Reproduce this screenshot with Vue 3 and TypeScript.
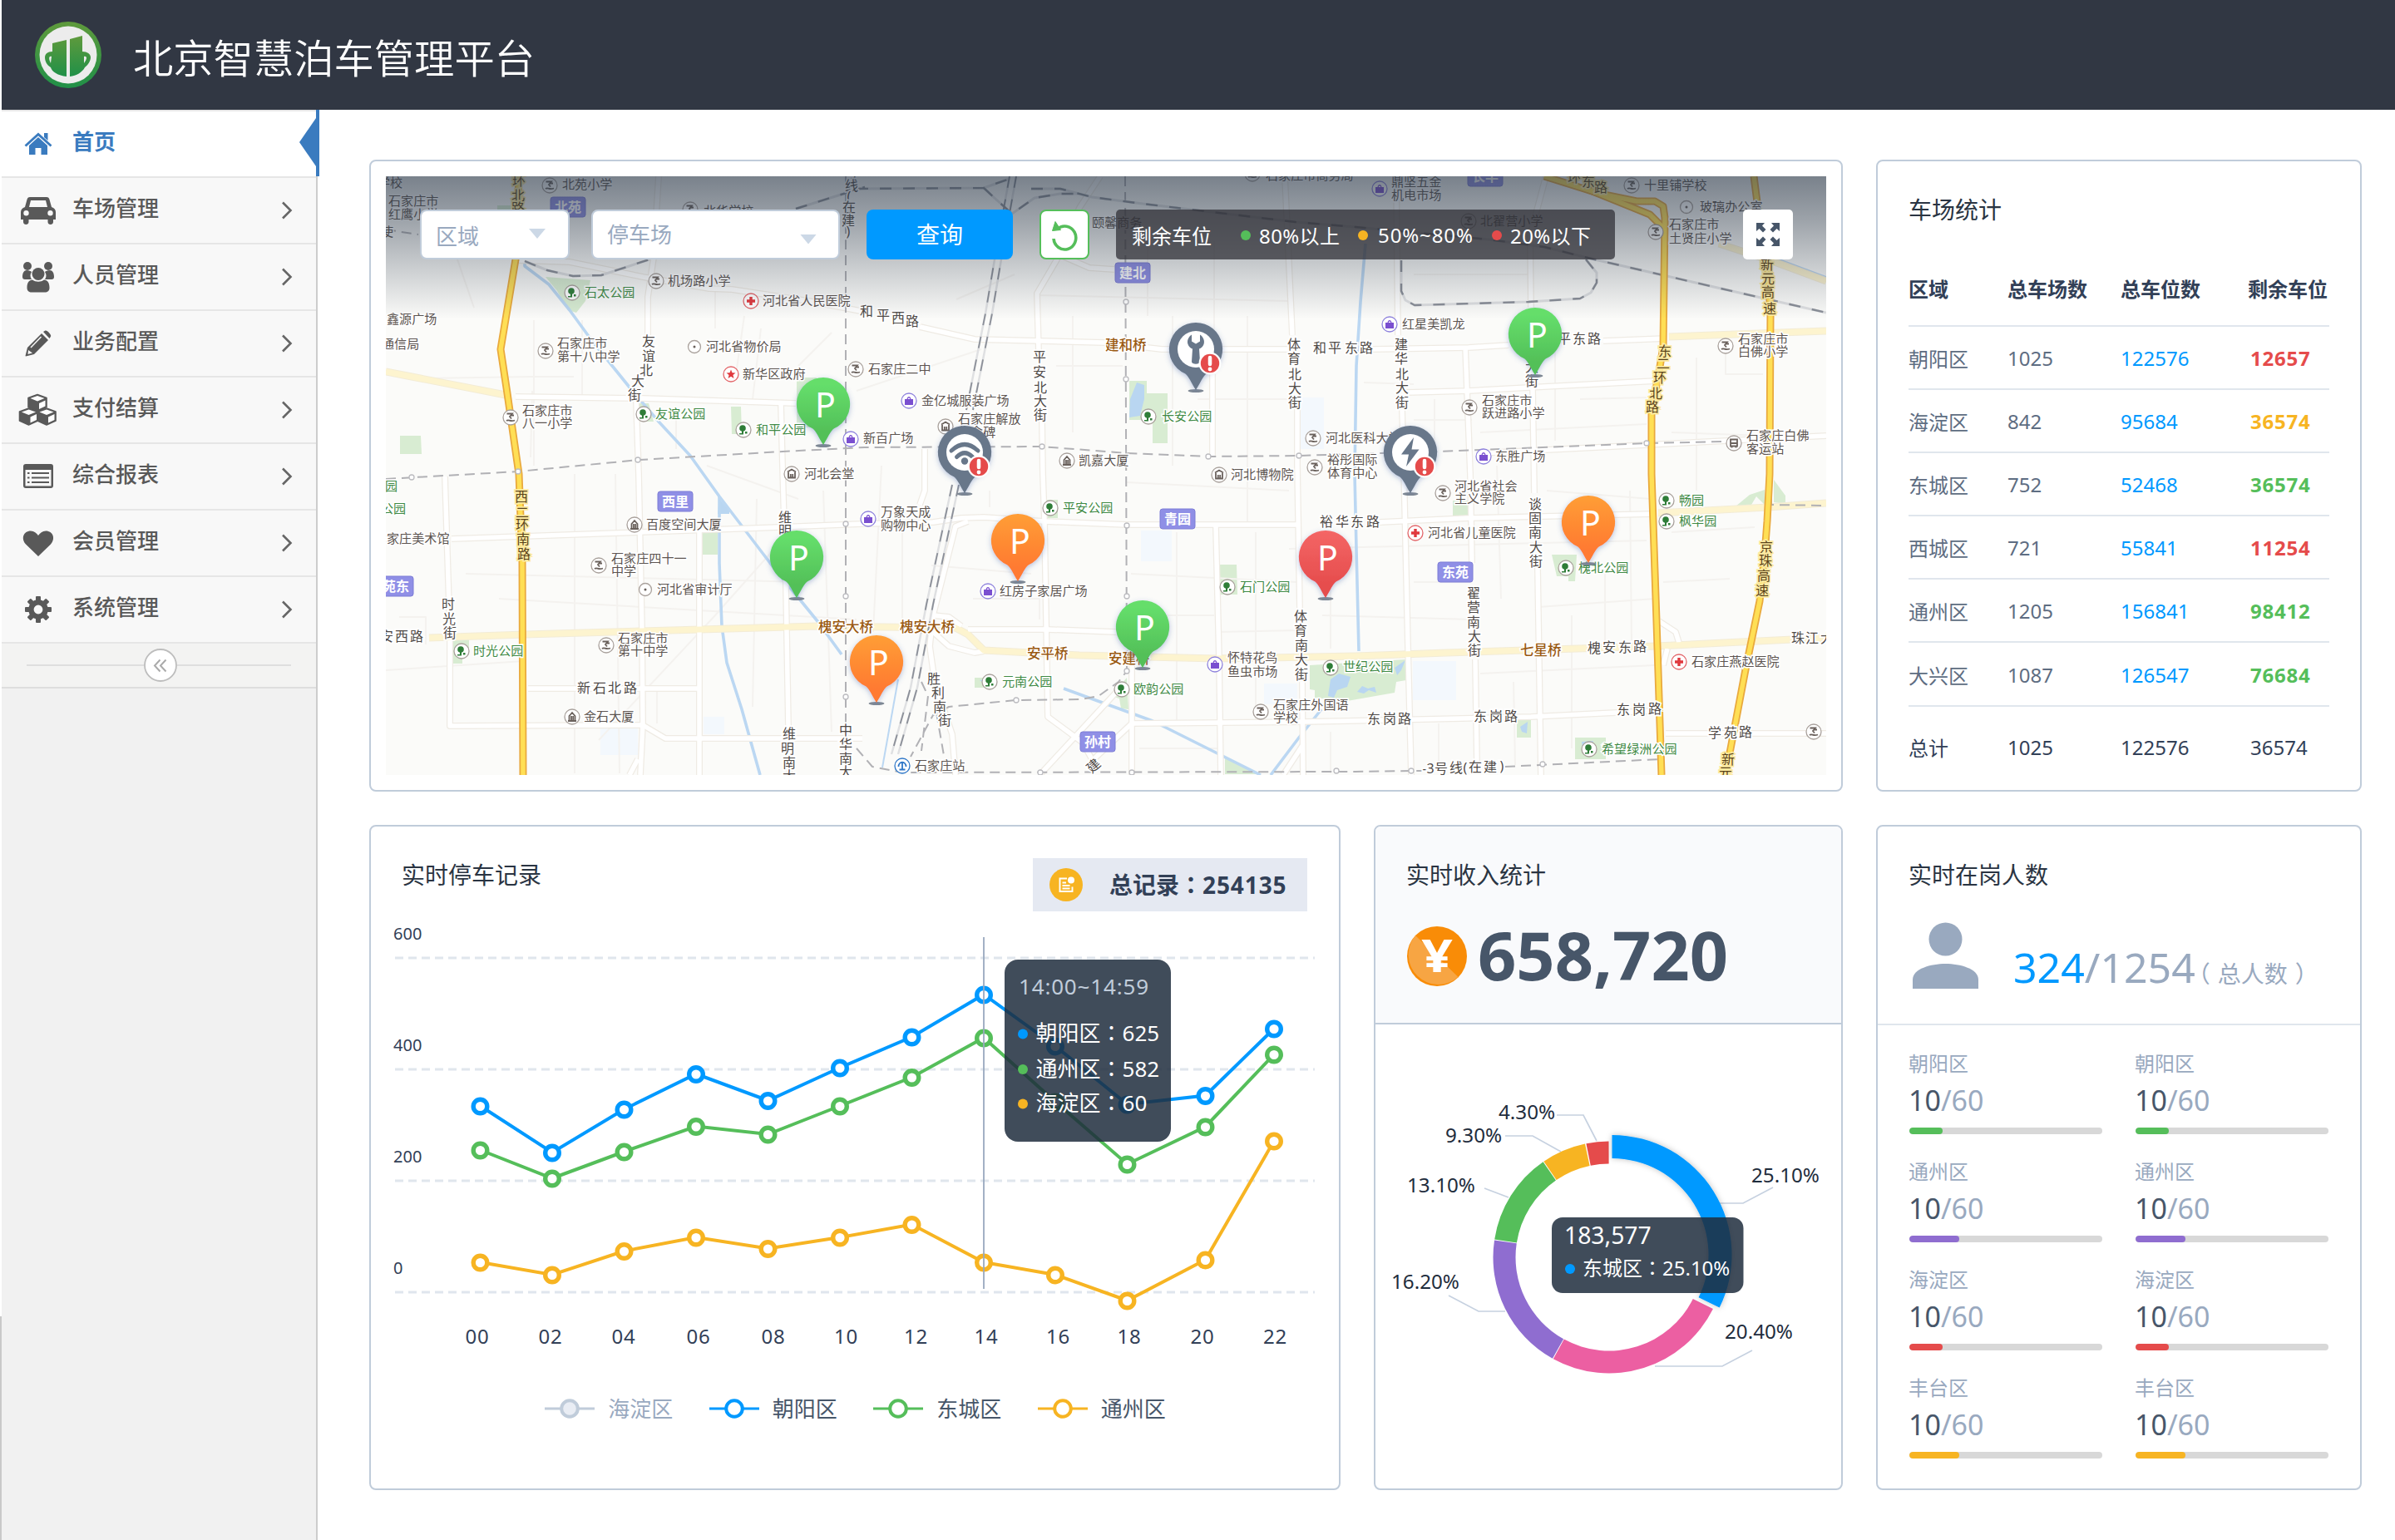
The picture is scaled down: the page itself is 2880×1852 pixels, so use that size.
<script setup lang="ts">
interface MenuItem { label: string; icon: string }
interface Place { x: number; y: number; icon: string; tx: number; lines: [number, string][] }

const menu: MenuItem[] = [
  { label: '首页', icon: 'home' },
  { label: '车场管理', icon: 'car' },
  { label: '人员管理', icon: 'users' },
  { label: '业务配置', icon: 'pencil' },
  { label: '支付结算', icon: 'cubes' },
  { label: '综合报表', icon: 'list' },
  { label: '会员管理', icon: 'heart' },
  { label: '系统管理', icon: 'gear' },
]

/* ---------- map ---------- */
const parks: string[] = [
  '656,333 710,337 704,362 693,376 683,373 670,350',
  '958,454 982,454 982,514 958,514',
  '879,489 891,489 892,522 880,522',
  '481,524 506,524 507,546 481,546',
  '767,485 780,485 786,507 770,507',
  '845,640 863,640 863,667 845,667',
  '543,769 564,769 564,782 556,782 556,798 543,798',
  '1358,458 1379,458 1379,473 1404,473 1404,533 1386,533 1386,505 1358,505',
  '1258,601 1272,601 1272,623 1258,623',
  '1466,679 1487,679 1488,715 1466,715',
  '1172,815 1195,815 1195,827 1172,827',
  '1336,837 1355,815 1357,853 1348,852 1346,840',
  '1575,800 1691,793 1691,818 1679,820 1677,833 1620,843 1581,839 1581,830 1575,829',
  '1473,910 1516,931 1473,931',
  '1747,602 1765,602 1765,622 1747,622',
  '1866,667 1896,667 1894,699 1886,699 1886,693 1872,693',
  '1824,865 1841,865 1841,887 1824,887',
  '1894,887 1931,887 1931,913 1894,913',
  '2087,609 2104,595 2122,589 2122,607 2112,597 2106,607',
  '2133,577 2147,596 2147,606 2133,604',
  '598,247 614,247 614,254 598,254',
]
const waters: string[] = [
  '1367,460 1376,463 1376,480 1371,500 1358,502 1359,480',
  '1600,817 1610,810 1624,814 1620,826 1608,830 1604,839 1597,837',
  '1677,803 1690,794 1685,806 1680,812',
  '1632,832 1638,825 1645,828 1653,826 1655,833 1646,830 1640,834',
  '1828,874 1837,868 1836,882 1830,880',
  '1902,892 1916,891 1914,899 1903,899',
  '1178,818 1188,816 1186,823',
  '865,600 877,613 877,618 863,618',
]
const buildings: number[][] = [
  [722, 874, 45, 34], [1372, 638, 37, 37], [1699, 795, 52, 47], [1562, 478, 30, 62], [1520, 822, 40, 25], [846, 862, 25, 21],
]
const minorRoads: string[] = [
  '550,312 570,370', '642,385 642,560', '510,455 640,453', '860,350 860,395', '640,453 690,453',
  '700,385 700,480', '813,490 813,540', '895,380 885,450', '915,395 905,480', '850,560 960,600',
  '691,570 691,930', '480,742 512,742 512,775', '560,690 970,700', '600,720 1030,745', '720,890 860,740 940,650',
  '910,600 905,850', '990,590 1000,880', '1060,560 1050,760', '1085,640 1085,760', '1120,680 1240,690',
  '1170,720 1250,720 1250,745', '1190,590 1190,610', '1030,470 1180,420', '1290,380 1290,520', '1150,360 1220,330',
  '1245,355 1550,362', '1270,440 1350,440', '1440,480 1550,480', '1410,380 1410,560', '1500,380 1500,630',
  '1355,580 1550,590', '1360,690 1560,700', '1415,640 1415,870', '1510,640 1510,870', '1362,740 1460,740',
  '1465,760 1560,758', '1600,640 1600,780', '1590,740 1770,745', '1700,700 1770,700', '1640,460 1700,462',
  '1700,505 1770,505', '1725,480 1725,540', '1870,420 1870,530', '1780,520 1980,510', '1900,480 1980,478',
  '1800,560 1805,720', '1850,730 1990,720', '1890,740 1890,900', '1860,590 1985,600', '1930,690 1930,780',
  '1960,590 1962,770', '1780,810 1990,800', '1820,820 1822,920', '2010,520 2120,524', '2075,420 2075,450 2120,450',
  '2010,640 2110,634', '2000,700 2080,696', '2040,430 2040,590', '1700,330 1840,330', '1380,290 1380,380',
  '1460,290 1460,400', '1370,900 1470,900', '1600,880 1600,930', '1730,870 1730,930', '1550,660 1980,650',
  '464,806 630,795', '640,470 638,550', '740,570 745,930', '790,830 790,870', '1000,400 960,440',
]
const roads: string[] = [
  '792,212 786,310 779,357 779,403', '765,483 768,570 772,757 773,870 770,932', '767,913 757,932',
  '624,313 685,315 773,333 853,347 880,348 972,362 1040,375', '1106,393 1172,408 1328,412 1397,420 1550,420',
  '1651,420 1766,418 1814,415', '1928,410 2003,407', '620,477 773,479 957,485', '939,485 941,560 945,703 949,932',
  '543,648 769,640 911,635 1037,630 1122,628 1156,623 1183,622 1256,627 1355,631 1562,631',
  '1659,628 1766,623 1988,618', '535,573 541,760 541,873 773,872 800,888 1037,888',
  '635,828 841,828', '841,637 841,932', '1323,212 1298,250 1271,312 1247,353 1249,423', '1271,305 1310,322 1340,324',
  '1253,507 1254,570 1256,627 1260,862 1302,893 1313,913', '1164,757 1260,757 1342,760',
  '1164,627 1149,633 1122,740 1118,777 1124,820 1145,883 1149,932', '1122,760 1141,777 1172,785 1183,783',
  '1122,740 1141,742 1156,753', '1351,823 1252,930', '1361,800 1361,932', '1361,870 1566,868 1620,867 1841,862 1984,855',
  '1361,870 1313,915', '1545,212 1554,403', '1560,487 1560,560 1563,733', '1566,820 1567,932', '1566,897 1543,932',
  '1458,450 1458,550', '1462,633 1466,793 1468,932', '1679,212 1681,403', '1686,493 1688,560 1693,777 1697,932',
  '1859,212 1840,283 1841,370', '1843,467 1845,593', '1849,683 1853,932', '1762,417 1768,570 1770,677',
  '1774,793 1776,918', '1691,472 1766,470 1857,465 1992,458', '2003,882 2196,882', '1995,747 2015,760 2019,773',
  '2005,780 2000,800', '1112,540 1112,590 1106,607', '1780,545 2196,524', '464,648 475,648',
]
const paleRoads: string[] = [
  '464,447 490,452 608,475',
  '516,767 631,763 842,757 983,753 1149,755 1164,763 1183,782 1298,788 1462,792 1630,789 1740,785 1992,777 2094,772 2196,767',
  '2007,405 2196,398', '1994,617 2126,610 2196,605', '2067,293 2134,315 2196,338',
]
const rivers: string[] = [
  '631,314 631,320 660,342 685,373 712,410 758,467 792,507 830,548 865,597 926,677 983,747 1012,787',
  '865,597 865,677 868,753 874,797 892,853 914,932', '1279,828 1386,867 1516,932', '1528,932 1562,887 1589,853',
  '1642,293 1636,363 1631,440 1629,570 1631,660 1634,783', '2134,310 2196,333', '1924,228 1988,257', '1080,817 1061,923',
]
const highways: string[] = [
  '624,212 620,312 602,420 610,473 624,570 628,675 629,932',
  '1857,212 1924,233 1968,242 1990,242 2000,248 2002,262 2000,417 1994,453 1986,493 1986,570 1992,747 1998,932',
  '1905,226 1984,258 2001,275',
  '2109,212 2113,243 2125,317 2129,377 2128,570 2125,627 2122,667 2116,723 2100,800 2075,932',
]
const metro: string[] = [
  '464,576 623,567 769,553 941,543 1040,538 1252,537 1355,545 1453,549 1562,548 1727,543 1980,533 2075,531',
  '1017,212 1017,932', '1353,212 1355,807 1345,820 1321,837 1300,841 1221,842 1141,850 1122,860 1095,910',
  '1030,900 1049,922 1085,929 1630,928 1697,927 1712,927', '1810,922 1996,913', '2130,560 2130,607 2196,608',
  '1108,820 1116,837 1108,903', '1126,857 1137,920', '464,276 503,282',
]
const rails: string[] = [
  '1030,227 1183,226 1214,215', '1183,226 1198,240 1217,257 1244,238 1275,233 1298,233', '1240,227 1275,227 1313,237 1374,245 1558,267 1630,273 1790,288 1857,297 1913,311 2000,331 2196,376',
  '1685,313 1685,350 1690,361 1701,367 1838,363 1900,359 1913,352 1920,340 1920,328 1907,312', '631,314 658,325 689,332 723,331 781,312', '957,251 1040,225',
  '1214,212 1196,312 1185,377 1162,493', '1222,212 1204,312 1193,377 1170,493',
  '1145,583 1114,727 1095,827 1072,907', '1153,583 1122,727 1103,827 1080,907',
]
const stops: number[][] = [
  [767, 553], [623, 567], [495, 574], [1017, 630], [1017, 717], [1017, 838], [1354, 363], [1354, 456], [1253, 537],
  [1453, 549], [1562, 548], [1355, 632], [1355, 717], [1355, 807], [1222, 842], [1251, 929], [1361, 929], [1607, 927],
  [1980, 533], [1697, 927], [1855, 919],
]
const places: Place[] = [
  { x: 661, y: 223, icon: 'school', tx: 676, lines: [[222, '北苑小学']] },
  { x: 830, y: 252, icon: 'school', tx: 846, lines: [[254, '北华学校']] },
  { x: 789, y: 338, icon: 'school', tx: 803, lines: [[338, '机场路小学']] },
  { x: 688, y: 352, icon: 'park', tx: 703, lines: [[352, '石太公园']] },
  { x: 903, y: 362, icon: 'cross', tx: 917, lines: [[362, '河北省人民医院']] },
  { x: 656, y: 422, icon: 'school', tx: 670, lines: [[413, '石家庄市'], [429, '第十八中学']] },
  { x: 835, y: 417, icon: 'dot', tx: 849, lines: [[417, '河北省物价局']] },
  { x: 879, y: 450, icon: 'star', tx: 893, lines: [[450, '新华区政府']] },
  { x: 614, y: 502, icon: 'school', tx: 628, lines: [[494, '石家庄市'], [509, '八一小学']] },
  { x: 774, y: 498, icon: 'park', tx: 788, lines: [[498, '友谊公园']] },
  { x: 894, y: 517, icon: 'park', tx: 909, lines: [[517, '和平公园']] },
  { x: 1023, y: 528, icon: 'shop', tx: 1038, lines: [[527, '新百广场']] },
  { x: 1029, y: 444, icon: 'school', tx: 1044, lines: [[444, '石家庄二中']] },
  { x: 952, y: 570, icon: 'hall', tx: 967, lines: [[570, '河北会堂']] },
  { x: 1093, y: 482, icon: 'shop', tx: 1108, lines: [[482, '金亿城服装广场']] },
  { x: 1137, y: 513, icon: 'hall', tx: 1152, lines: [[504, '石家庄解放'], [520, '纪念碑']] },
  { x: 1381, y: 501, icon: 'park', tx: 1397, lines: [[501, '长安公园']] },
  { x: 1283, y: 554, icon: 'tower', tx: 1297, lines: [[554, '凯嘉大厦']] },
  { x: 1579, y: 527, icon: 'school', tx: 1594, lines: [[527, '河北医科大学']] },
  { x: 1581, y: 562, icon: 'school', tx: 1596, lines: [[553, '裕彤国际'], [569, '体育中心']] },
  { x: 1466, y: 571, icon: 'hall', tx: 1480, lines: [[571, '河北博物院']] },
  { x: 1506, y: 209, icon: 'school', tx: 1522, lines: [[211, '石家庄市商务局']] },
  { x: 1659, y: 227, icon: 'shop', tx: 1673, lines: [[219, '鼎坚五金'], [235, '机电市场']] },
  { x: 1962, y: 223, icon: 'school', tx: 1977, lines: [[223, '十里铺学校']] },
  { x: 2028, y: 249, icon: 'dot', tx: 2044, lines: [[249, '玻璃办公室']] },
  { x: 1991, y: 279, icon: 'school', tx: 2007, lines: [[270, '石家庄市'], [287, '土贤庄小学']] },
  { x: 1766, y: 266, icon: 'school', tx: 1780, lines: [[266, '北翟营小学']] },
  { x: 1671, y: 390, icon: 'shop', tx: 1686, lines: [[390, '红星美凯龙']] },
  { x: 2075, y: 416, icon: 'school', tx: 2090, lines: [[408, '石家庄市'], [423, '白佛小学']] },
  { x: 1767, y: 490, icon: 'school', tx: 1782, lines: [[482, '石家庄市'], [497, '跃进路小学']] },
  { x: 1784, y: 549, icon: 'shop', tx: 1798, lines: [[549, '东胜广场']] },
  { x: 2085, y: 533, icon: 'bus', tx: 2100, lines: [[524, '石家庄白佛'], [540, '客运站']] },
  { x: 763, y: 631, icon: 'tower', tx: 777, lines: [[631, '百度空间大厦']] },
  { x: 720, y: 680, icon: 'school', tx: 735, lines: [[672, '石家庄四十一'], [687, '中学']] },
  { x: 776, y: 709, icon: 'dot', tx: 790, lines: [[709, '河北省审计厅']] },
  { x: 555, y: 783, icon: 'park', tx: 569, lines: [[783, '时光公园']] },
  { x: 729, y: 776, icon: 'school', tx: 743, lines: [[768, '石家庄市'], [783, '第十中学']] },
  { x: 688, y: 862, icon: 'tower', tx: 702, lines: [[862, '金石大厦']] },
  { x: 1044, y: 624, icon: 'shop', tx: 1059, lines: [[616, '万象天成'], [632, '购物中心']] },
  { x: 1263, y: 611, icon: 'park', tx: 1278, lines: [[611, '平安公园']] },
  { x: 1188, y: 711, icon: 'shop', tx: 1202, lines: [[711, '红房子家居广场']] },
  { x: 1476, y: 706, icon: 'park', tx: 1491, lines: [[706, '石门公园']] },
  { x: 1461, y: 799, icon: 'shop', tx: 1476, lines: [[791, '怀特花鸟'], [808, '鱼虫市场']] },
  { x: 1600, y: 803, icon: 'park', tx: 1615, lines: [[802, '世纪公园']] },
  { x: 1190, y: 820, icon: 'park', tx: 1205, lines: [[820, '元南公园']] },
  { x: 1349, y: 829, icon: 'park', tx: 1363, lines: [[829, '欧韵公园']] },
  { x: 1516, y: 856, icon: 'school', tx: 1531, lines: [[848, '石家庄外国语'], [863, '学校']] },
  { x: 1085, y: 921, icon: 'station', tx: 1100, lines: [[921, '石家庄站']] },
  { x: 1735, y: 593, icon: 'school', tx: 1749, lines: [[585, '河北省社会'], [600, '主义学院']] },
  { x: 2004, y: 602, icon: 'park', tx: 2019, lines: [[602, '畅园']] },
  { x: 2004, y: 627, icon: 'park', tx: 2019, lines: [[627, '枫华园']] },
  { x: 1702, y: 641, icon: 'cross', tx: 1717, lines: [[641, '河北省儿童医院']] },
  { x: 1883, y: 683, icon: 'park', tx: 1898, lines: [[683, '槐北公园']] },
  { x: 2019, y: 796, icon: 'cross', tx: 2034, lines: [[796, '石家庄燕赵医院']] },
  { x: 1911, y: 901, icon: 'park', tx: 1926, lines: [[901, '希望绿洲公园']] },
  { x: 2181, y: 880, icon: 'school', tx: 2196, lines: [] },
]
const captions: [number, number, string, string][] = [
  [454, 220, '学校', ''], [467, 242, '石家庄市', ''], [467, 258, '红鹰小学', ''], [458, 279, '使', ''],
  [465, 384, '鑫源广场', ''], [459, 414, '通信局', ''], [463, 585, '园', 'green'], [458, 612, '公园', 'green'],
  [465, 648, '家庄美术馆', ''], [1313, 268, '颐馨商务', ''],
  [1329, 415, '建和桥', 'bridge'], [984, 754, '槐安大桥', 'bridge'], [1082, 754, '槐安大桥', 'bridge'],
  [1235, 786, '安平桥', 'bridge'], [1333, 792, '安建桥', 'bridge'], [1828, 782, '七星桥', 'bridge'],
]
const tags: [number, number, string][] = [
  [683, 249, '北苑'], [1362, 328, '建北'], [1786, 212, '长丰'], [812, 603, '西里'], [476, 705, '苑东'],
  [1416, 624, '青园'], [1320, 892, '孙村'], [1750, 688, '东苑'],
]
/* Street names are set one character at a time along the road: x, y pairs per character. */
const streets: [string, number[], boolean?][] = [
  ['环北路', [624, 218, 623, 236, 623, 251], true],
  ['号线(在建)', [1024, 208, 1024, 224, 1021, 237, 1021, 250, 1020, 266, 1020, 279]],
  ['友谊北大街', [780, 411, 780, 429, 777, 446, 767, 459, 763, 476]],
  ['和平西路', [1042, 375, 1062, 380, 1080, 383, 1097, 387]],
  ['平安北大街', [1250, 430, 1250, 448, 1251, 467, 1251, 483, 1251, 500]],
  ['和平东路', [1587, 419, 1605, 419, 1625, 419, 1643, 419]],
  ['体育北大街', [1556, 415, 1556, 432, 1557, 451, 1557, 468, 1557, 485]],
  ['环东路', [1893, 214, 1910, 219, 1925, 226], true],
  ['新元高速', [2125, 319, 2126, 336, 2126, 352, 2128, 372], true],
  ['建华北大街', [1685, 415, 1685, 432, 1686, 451, 1686, 467, 1686, 485]],
  ['平东路', [1881, 408, 1899, 408, 1917, 408]],
  ['大街', [1842, 442, 1842, 459]],
  ['东二环北路', [2002, 423, 2000, 438, 1996, 455, 1991, 474, 1987, 490], true],
  ['西二环南路', [627, 598, 628, 617, 628, 632, 629, 649, 630, 667], true],
  ['时光街', [539, 727, 540, 745, 541, 762]],
  ['安西路', [465, 766, 483, 766, 501, 766]],
  ['新石北路', [702, 828, 721, 828, 739, 828, 758, 828]],
  ['维明', [944, 623, 944, 639]],
  ['维明南大', [949, 883, 947, 901, 949, 918, 949, 934]],
  ['中华南大', [1017, 879, 1017, 896, 1017, 913, 1017, 929]],
  ['裕华东路', [1595, 628, 1614, 628, 1632, 628, 1651, 628]],
  ['体育南大街', [1564, 742, 1564, 759, 1565, 777, 1565, 794, 1565, 812]],
  ['胜利南街', [1123, 817, 1128, 834, 1130, 851, 1136, 867]],
  ['谈固南大街', [1846, 607, 1846, 624, 1846, 641, 1847, 659, 1847, 676]],
  ['翟营南大街', [1772, 714, 1772, 731, 1772, 749, 1773, 766, 1773, 783]],
  ['京珠高速', [2124, 659, 2123, 675, 2121, 693, 2119, 711], true],
  ['珠江大', [2162, 768, 2179, 768, 2197, 768]],
  ['槐安东路', [1917, 780, 1935, 779, 1954, 779, 1972, 778]],
  ['东岗路', [1652, 865, 1671, 865, 1689, 865]],
  ['东岗路', [1780, 862, 1799, 862, 1817, 862]],
  ['东岗路', [1952, 854, 1971, 854, 1990, 853]],
  ['学苑路', [2062, 882, 2081, 882, 2099, 881]],
  ['-3号线(在建)', [1713, 925, 1720, 925, 1733, 925, 1751, 924, 1762, 924, 1774, 923, 1792, 923, 1806, 922]],
  ['新', [2078, 914], true], ['元', [2075, 930], true],
]
const streetChars = streets.flatMap(([text, pos, onHighway]) =>
  [...text].map((ch, i) => ({ ch, x: pos[i * 2], y: pos[i * 2 + 1], gold: !!onHighway })))

const pins = [
  { x: 990, y: 454, kind: 'green' }, { x: 1846, y: 370, kind: 'green' }, { x: 958, y: 638, kind: 'green' },
  { x: 1374, y: 722, kind: 'green' }, { x: 1224, y: 618, kind: 'orange' }, { x: 1054, y: 764, kind: 'orange' },
  { x: 1910, y: 596, kind: 'orange' }, { x: 1594, y: 638, kind: 'red' }, { x: 1438, y: 388, kind: 'wrench' },
  { x: 1160, y: 512, kind: 'wifi' }, { x: 1696, y: 512, kind: 'bolt' },
]
const isParking = (kind: string) => ['green', 'orange', 'red'].includes(kind)

/* ---------- table ---------- */
const rows = [
  ['朝阳区', '1025', '122576', '12657', 'red'],
  ['海淀区', '842', '95684', '36574', 'amber'],
  ['东城区', '752', '52468', '36574', 'green'],
  ['西城区', '721', '55841', '11254', 'red'],
  ['通州区', '1205', '156841', '98412', 'green'],
  ['大兴区', '1087', '126547', '76684', 'green'],
]

/* ---------- line chart ---------- */
const xs = [577.5, 664, 750.5, 837, 923.5, 1010, 1096.5, 1183, 1269, 1355.5, 1449.5, 1532]
const series = [
  { color: '#f7b422', ys: [1518, 1533, 1504.5, 1488, 1501.5, 1488, 1472.5, 1518, 1533, 1564, 1515, 1372] },
  { color: '#55be5a', ys: [1383, 1417, 1385, 1354.5, 1364, 1330, 1295.5, 1248, 1325, 1400, 1355, 1268] },
  { color: '#0099ff', ys: [1330, 1386, 1334, 1291.5, 1323.5, 1284, 1247, 1196, 1258, 1328, 1317.5, 1237] },
]
const linePoints = (ys: number[]) => ys.map((y, i) => `${xs[i]},${y}`).join(' ')
const yTicks: [string, number][] = [['600', 1123], ['400', 1257], ['200', 1391], ['0', 1525]]
const xTicks: [string, number][] = [
  ['00', 574], ['02', 662], ['04', 750], ['06', 840], ['08', 930], ['10', 1017.5],
  ['12', 1101.5], ['14', 1186], ['16', 1272.5], ['18', 1358], ['20', 1446], ['22', 1533.5],
]
const legend = [
  { name: '海淀区', color: '#c0ccda', fill: '#e9edf4', off: true },
  { name: '朝阳区', color: '#0099ff', fill: '#fff', off: false },
  { name: '东城区', color: '#55be5a', fill: '#fff', off: false },
  { name: '通州区', color: '#f7b422', fill: '#fff', off: false },
]
const tipRows = [
  { name: '朝阳区', value: '625', color: '#0099ff', y: 1243.5 },
  { name: '通州区', value: '582', color: '#55be5a', y: 1286 },
  { name: '海淀区', value: '60', color: '#f7b422', y: 1327.5 },
]

/* ---------- donut ---------- */
function arc(cx: number, cy: number, ro: number, ri: number, a0: number, a1: number): string {
  const p = (r: number, a: number) => {
    const t = (a * Math.PI) / 180
    return `${(cx + r * Math.sin(t)).toFixed(2)} ${(cy - r * Math.cos(t)).toFixed(2)}`
  }
  return `M${p(ro, a0)}A${ro} ${ro} 0 0 1 ${p(ro, a1)}L${p(ri, a1)}A${ri} ${ri} 0 0 0 ${p(ri, a0)}Z`
}
const slices = [
  { color: '#ec5fa2', d: arc(1935, 1512, 139.5, 112.5, 116.4, 208.8) },
  { color: '#8f6dd0', d: arc(1935, 1512, 139.5, 112.5, 209.2, 278.5) },
  { color: '#55be5a', d: arc(1935, 1512, 139.5, 112.5, 278.9, 325.3) },
  { color: '#f7b422', d: arc(1935, 1512, 139.5, 112.5, 325.7, 348) },
  { color: '#e54b4b', d: arc(1935, 1512, 139.5, 112.5, 348.6, 359.8) },
]
const hotSlice = arc(1938.5, 1509, 144, 116, 0, 116.2)
const shares: [string, number, number, string][] = [
  ['4.30%', 1802, 1337, '1872,1341 1904,1341 1920,1372'],
  ['9.30%', 1738, 1365, '1810,1366 1843,1366 1877,1385'],
  ['13.10%', 1692, 1425, '1785,1429 1814,1440'],
  ['16.20%', 1673, 1541, '1742,1558 1778,1577 1810,1577'],
  ['25.10%', 2106, 1413, '2068,1447 2096,1447 2132,1428'],
  ['20.40%', 2074, 1601, '1990,1643 2071,1643 2107,1624'],
]

/* ---------- staff ---------- */
const staff = [
  { name: '朝阳区', color: '#55be5a', width: 40 },
  { name: '通州区', color: '#8f6dd0', width: 60 },
  { name: '海淀区', color: '#e54b4b', width: 40 },
  { name: '丰台区', color: '#f7b422', width: 60 },
].flatMap((s) => [s, s])
</script>

<template>
  <div class="page">
    <header class="topbar">
      <svg class="logo" viewBox="0 0 80 80">
        <defs>
          <linearGradient id="lg" x1="0" y1="0" x2="0" y2="1">
            <stop offset="0" stop-color="#5f9a3c" /><stop offset="1" stop-color="#209048" />
          </linearGradient>
        </defs>
        <circle cx="40" cy="40" r="40" fill="url(#lg)" />
        <circle cx="40" cy="40" r="34.5" fill="#ececec" />
        <path d="M21 26L38 22V66C28 65 20 60 19 55C14 52 12 47 12 43C12 39 15 36 21 36ZM20 42C17 41 16 44 19 50ZM42 21L57 17V36C63 36 67 39 67 43C67 47 64 52 60 55C57 61 50 65 42 66ZM59 42V50C63 45 63 41 59 42Z" fill="url(#lg)" fill-rule="evenodd" />
      </svg>
      <h1>北京智慧泊车管理平台</h1>
    </header>

    <div class="body">
      <aside class="sidebar">
        <nav>
          <a v-for="(m, i) in menu" :key="m.label" class="item" :class="{ active: i === 0 }">
            <svg class="micon" viewBox="0 0 48 40" fill="currentColor">
              <g v-if="m.icon === 'home'">
                <path d="M24 12L35 22V33H27.500V25H20.500V33H13V22Z" />
                <path d="M8.500 22.500L24 8.500L39.500 22.500" fill="none" stroke="currentColor" stroke-width="2.800" /><path d="M31 7H35.500V16L31 12Z" />
              </g>
              <path v-else-if="m.icon === 'car'" fill-rule="evenodd" d="M14 4H34C36 4 37 5 37.500 7L40 16C43 17 45 19 45 22V31H42V34C42 38 35.500 38 35.500 34V31H12.500V34C12.500 38 6 38 6 34V31H3V22C3 19 5 17 8 16L10.500 7C11 5 12 4 14 4ZM15 8L13 16H35L33 8ZM9.500 20A3.200 3.200 0 1 0 9.500 26.400A3.200 3.200 0 1 0 9.500 20ZM38.500 20A3.200 3.200 0 1 0 38.500 26.400A3.200 3.200 0 1 0 38.500 20Z" />
              <g v-else-if="m.icon === 'users'">
                <circle cx="11" cy="7" r="5" /><circle cx="36" cy="7" r="5" /><path d="M5 20C5 15 7 12 10 12C13 12 15 13 16 14C14 17 14 20 16 23H8C6 23 5 22 5 20ZM43 20C43 15 41 12 38 12C35 12 33 13 32 14C34 17 34 20 32 23H40C42 23 43 22 43 20Z" />
                <circle cx="24" cy="16.500" r="7.500" /><path d="M10.500 33C10.500 27 13 23.500 17 23.500C21 26.500 27 26.500 31 23.500C35 23.500 37.500 27 37.500 33C37.500 37 35 38.500 32 38.500H16C13 38.500 10.500 37 10.500 33Z" />
              </g>
              <g v-else-if="m.icon === 'pencil'">
                <path d="M28 8L36 16L19 33L9 35.500L8.500 35L11 25Z" /><path d="M30 6L32.500 4.500Q34 4 36 6L38.500 9Q40 11 38.500 12.500L37.500 14Z" />
                <path d="M27.500 12L15 25" stroke="#f8f8f8" stroke-width="1.500" /><path d="M12 28L17 31.500L11.500 33Z" fill="#f8f8f8" />
              </g>
              <g v-else-if="m.icon === 'cubes'" fill="#595959" stroke="#595959" stroke-width="1.600" stroke-linejoin="round">
                <g v-for="(c, k) in [[23, 1.500], [12.500, 18], [34, 18]]" :key="k" :transform="`translate(${c[0]} ${c[1]})`">
                  <path d="M0 0L11 4V15L0 20L-11 15V4Z" />
                  <path d="M0 1.500L8.500 4.500L0 8L-8.500 4.500Z" fill="#fff" stroke="none" /><path d="M2 10.500L9.500 7V14L2 17.500Z" fill="#fff" stroke="none" />
                </g>
              </g>
              <g v-else-if="m.icon === 'list'">
                <path fill-rule="evenodd" d="M9 5H39Q42 5 42 8V31Q42 34 39 34H9Q6 34 6 31V8Q6 5 9 5ZM8.500 12V31.500H39.500V12Z" />
                <path d="M11 16H13.500M16 16H37M11 21.500H13.500M16 21.500H37M11 27H13.500M16 27H37" fill="none" stroke="currentColor" stroke-width="2.200" />
              </g>
              <path v-else-if="m.icon === 'heart'" d="M24 36L9 21.500C3 15 6 5.500 15 5.500C19 5.500 22 8 24 11C26 8 29 5.500 33 5.500C42 5.500 45 15 39 21.500Z" />
              <g v-else>
                <circle cx="24" cy="20" r="8.600" fill="none" stroke="currentColor" stroke-width="6.400" />
                <rect v-for="k in 8" :key="k" x="21" y="4" width="6" height="7" rx="1" :transform="`rotate(${k * 45} 24 20)`" />
              </g>
            </svg>
            <span>{{ m.label }}</span>
            <svg v-if="i" class="chev" viewBox="0 0 14 22"><path d="M2 1.500L11.500 11L2 20.500" /></svg>
            <i v-else class="mark" />
          </a>
        </nav>
        <div class="collapse">
          <svg viewBox="0 0 40 40"><circle cx="20" cy="20" r="19" /><path d="M19.500 13.500L13 20.500L19.500 27.500M26.500 13.500L20 20.500L26.500 27.500" /></svg>
        </div>
      </aside>

      <main class="main">
        <div class="row top">
          <section class="panel map-panel">
            <div class="map">
              <svg class="canvas" viewBox="464 212 1732 720">
                <defs>
                  <linearGradient id="shade" x1="0" y1="0" x2="0" y2="1">
                    <stop offset="0" stop-color="#2d3a4b" stop-opacity=".63" /><stop offset=".3" stop-color="#2d3a4b" stop-opacity=".46" /><stop offset="1" stop-color="#2d3a4b" stop-opacity="0" />
                  </linearGradient>
                  <linearGradient id="pg" x1="0" y1="0" x2="0" y2="1"><stop offset=".1" stop-color="#65de6b" /><stop offset=".8" stop-color="#53c058" /></linearGradient>
                  <linearGradient id="po" x1="0" y1="0" x2="0" y2="1"><stop offset="0" stop-color="#ff9e36" /><stop offset=".8" stop-color="#ff7a30" /></linearGradient>
                  <linearGradient id="pr" x1="0" y1="0" x2="0" y2="1"><stop offset="0" stop-color="#f46666" /><stop offset=".8" stop-color="#e64d4d" /></linearGradient>
                  <filter id="soft" x="-30%" y="-30%" width="160%" height="160%"><feDropShadow dx="0" dy="2" stdDeviation="3" flood-color="#4a6ab0" flood-opacity=".4" /></filter>
                </defs>
                <rect x="464" y="212" width="1732" height="720" fill="#fbfbf9" />
                <rect v-for="(b, i) in buildings" :key="'b' + i" :x="b[0]" :y="b[1]" :width="b[2]" :height="b[3]" fill="#f3f8fd" />
                <polygon v-for="(p, i) in parks" :key="'p' + i" :points="p" fill="#d8ecd2" />
                <polygon v-for="(p, i) in waters" :key="'w' + i" :points="p" fill="#b9d6f1" />
                <g class="ln">
                  <polyline v-for="(p, i) in minorRoads" :key="'m' + i" :points="p" stroke="#f4f2ef" stroke-width="2" />
                  <polyline v-for="(p, i) in rivers" :key="'r' + i" :points="p" stroke="#bbd7f2" :stroke-width="i > 4 ? 2 : 3.600" />
                  <polyline v-for="(p, i) in roads" :key="'c' + i" :points="p" stroke="#efebe4" stroke-width="8" />
                  <polyline v-for="(p, i) in paleRoads" :key="'d' + i" :points="p" stroke="#f3ecd6" stroke-width="9" />
                  <polyline v-for="(p, i) in roads" :key="'e' + i" :points="p" stroke="#fff" stroke-width="5.500" />
                  <polyline v-for="(p, i) in paleRoads" :key="'f' + i" :points="p" stroke="#fdf4cf" stroke-width="7" />
                  <polyline v-for="(p, i) in metro" :key="'g' + i" :points="p" stroke="#b1b1b5" stroke-width="2" stroke-dasharray="12 7" />
                  <polyline v-for="(p, i) in rails" :key="'h' + i" :points="p" stroke="#dfe0e2" :stroke-width="i > 5 ? 2.500 : 3" />
                  <polyline v-for="(p, i) in rails" :key="'i' + i" :points="p" stroke="#8b8f98" :stroke-width="i > 5 ? 1.800 : 2.400" stroke-dasharray="14 14" />
                  <polyline v-for="(p, i) in highways" :key="'j' + i" :points="p" stroke="#e9a93d" stroke-width="9" />
                  <polyline v-for="(p, i) in highways" :key="'k' + i" :points="p" stroke="#ffdf55" stroke-width="5.500" />
                </g>
                <circle v-for="(s, i) in stops" :key="'s' + i" :cx="s[0]" :cy="s[1]" r="3" fill="#fff" stroke="#bcbcc0" stroke-width="1.300" />

                <g v-for="(t, i) in tags" :key="'t' + i">
                  <rect :x="t[0] - 21" :y="t[1] - 12" width="42" height="24" rx="3" fill="#8f8fe6" stroke="#7d7dd6" />
                  <text class="tag" :x="t[0]" :y="t[1]" dy=".36em">{{ t[2] }}</text>
                </g>
                <text v-for="(c, i) in captions" :key="'q' + i" class="poi" :class="c[3]" :x="c[0]" :y="c[1]" dy=".34em">{{ c[2] }}</text>
                <g v-for="(p, i) in places" :key="'l' + i">
                  <g :transform="`translate(${p.x} ${p.y})`" class="sym" :class="p.icon">
                    <circle :r="p.icon === 'dot' ? 7.500 : 9" />
                    <path v-if="p.icon === 'school'" d="M-4.500 -4.500H2L-1 -1L1 1.500M-5 4C-2 1.500 -1 6 5 3.500M0 -2.500H4" class="st" />
                    <g v-else-if="p.icon === 'park'"><circle cx="-1" cy="-2" r="3.800" class="f" /><path d="M-2 0H0V5H-2ZM-5 4H0V5.500H-5ZM2 2H4.500V4.500H2Z" class="f" /></g>
                    <path v-else-if="p.icon === 'cross'" d="M-1.700 -5H1.700V-1.700H5V1.700H1.700V5H-1.700V1.700H-5V-1.700H-1.700Z" class="f" />
                    <path v-else-if="p.icon === 'star'" d="M0 -5.500L1.500 -1.700L5.500 -1.500L2.400 1L3.500 5L0 2.700L-3.500 5L-2.400 1L-5.500 -1.500L-1.500 -1.700Z" class="f" />
                    <path v-else-if="p.icon === 'shop'" d="M-5 -2H-2.500C-2 -6 2 -6 2.500 -2H5V5H-5ZM-1.300 -2H1.300C1 -4 -1 -4 -1.300 -2Z" class="f" fill-rule="evenodd" />
                    <path v-else-if="p.icon === 'hall'" d="M-5 -2.500L0 -5.500L5 -2.500M-4 -2V4.500H4V-2M-1.200 4V0M1.200 4V0" class="st" />
                    <path v-else-if="p.icon === 'tower'" d="M-5 5H5M-3.500 4V-1L0 -5L3.500 -1V4M-1 4V-1M1.200 4V-1" class="st" />
                    <path v-else-if="p.icon === 'bus'" d="M-4 -4.500H4V3.500H-4ZM-4 0H4M-2.500 3.500V5.500M2.500 3.500V5.500" class="st" />
                    <path v-else-if="p.icon === 'station'" d="M-4.500 1C-4.500 -6 4.500 -6 4.500 1M0 -4V4M-3.500 4.500H3.500" class="st" />
                    <circle v-else r="1.500" class="f" />
                  </g>
                  <text v-for="l in p.lines" :key="l[1]" class="poi" :class="{ green: p.icon === 'park' }" :x="p.tx" :y="l[0]" dy=".34em">{{ l[1] }}</text>
                </g>
                <text v-for="(c, i) in streetChars" :key="'u' + i" class="street" :class="{ gold: c.gold }" :x="c.x" :y="c.y" dy=".34em">{{ c.ch }}</text>
                <text class="street" transform="translate(1315 921) rotate(-42)" dy=".34em">建</text>

                <rect x="464" y="212" width="1732" height="172" fill="url(#shade)" />

                <g v-for="(p, i) in pins" :key="'n' + i" :transform="`translate(${p.x} ${p.y})`">
                  <ellipse cx="0" cy="82" rx="9.500" ry="2" fill="#7f8893" />
                  <path filter="url(#soft)" d="M0 0A32 32 0 0 1 13 61.300C9 64 5 73 0 81C-5 73 -9 64 -13 61.300A32 32 0 0 1 0 0Z"
                    :fill="p.kind === 'green' ? 'url(#pg)' : p.kind === 'orange' ? 'url(#po)' : p.kind === 'red' ? 'url(#pr)' : '#68778a'" />
                  <text v-if="isParking(p.kind)" class="p" x="2.500" y="47.500">P</text>
                  <g v-else>
                    <circle cy="32" r="22" fill="#fff" />
                    <path v-if="p.kind === 'wrench'" fill="#68778a" d="M-5 14.500V22.500L0 25.500L5 22.500V14.500C9 17 11 22 9.500 26C8.500 29 6.500 30.500 4 31.500L5 47C5 50.500 -5 50.500 -5 47L-4 31.500C-6.500 30.500 -8.500 29 -9.500 26C-11 22 -9 17 -5 14.500Z" />
                    <g v-else-if="p.kind === 'wifi'"><path d="M-16 30Q0 15 16 30M-9.500 37.500Q0 28 9.500 37.500" fill="none" stroke="#68778a" stroke-width="5" stroke-linecap="round" /><circle cy="42.500" r="4.200" fill="#68778a" /></g>
                    <path v-else fill="#68778a" d="M4 14L-11 34.500H-2L-5 49L10.500 28.500H1.500Z" />
                    <circle cx="17" cy="49" r="13.500" fill="#fff" /><circle cx="17" cy="49" r="11.200" fill="#e54b4b" />
                    <path d="M17 42V50" stroke="#fff" stroke-width="4.500" stroke-linecap="round" /><circle cx="17" cy="56" r="2.400" fill="#fff" />
                  </g>
                </g>
              </svg>

              <div class="tools">
                <div class="select s1"><span>区域</span><i /></div>
                <div class="select s2"><span>停车场</span><i /></div>
                <button class="query">查询</button>
                <button class="reset">
                  <svg viewBox="0 0 60 60"><path d="M21.500 23.500A13.400 14 0 1 1 17 35" fill="none" stroke="#55be5a" stroke-width="3.600" /><path d="M19 14.500L25.500 24.500L15.500 25.500Z" fill="#55be5a" stroke="#55be5a" stroke-linejoin="round" /></svg>
                </button>
                <div class="levels">
                  <b>剩余车位</b>
                  <span class="lv g">80%以上</span><span class="lv a">50%~80%</span><span class="lv r">20%以下</span>
                </div>
                <button class="full">
                  <svg viewBox="0 0 28 28" fill="#475669"><path v-for="k in 4" :key="k" :transform="`rotate(${k * 90} 14 14)`" d="M0 0H10L7 3.500L11.500 8L8 11.500L3.500 7L0 10Z" /></svg>
                </button>
              </div>
            </div>
          </section>

          <section class="panel stats">
            <h2>车场统计</h2>
            <div class="tr th"><span>区域</span><span>总车场数</span><span>总车位数</span><span>剩余车位</span></div>
            <div v-for="r in rows" :key="r[0]" class="tr">
              <span>{{ r[0] }}</span><span>{{ r[1] }}</span><span class="blue">{{ r[2] }}</span><span class="left" :class="r[4]">{{ r[3] }}</span>
            </div>
            <div class="tr sum"><span>总计</span><span>1025</span><span>122576</span><span class="total">36574</span></div>
          </section>
        </div>

        <div class="row bottom">
          <section class="panel records">
            <div class="rec-head">
              <h2>实时停车记录</h2>
              <div class="badge">
                <svg viewBox="0 0 40 40"><circle cx="20" cy="20" r="20" fill="#f7b422" />
                  <path d="M21 12.500H12.500V28H27.500V22.500M15.500 17.500H20M15.500 21H24.500M15.500 24.500H24.500" fill="none" stroke="#fff" stroke-width="1.900" /><circle cx="26" cy="14.500" r="4" fill="#fff" />
                </svg>
                <b>总记录<span class="colon">：</span><em>254135</em></b>
              </div>
            </div>
            <svg class="chart" viewBox="446 1096 1164 564">
              <line v-for="y in [1152, 1286, 1420, 1554]" :key="y" x1="475" x2="1581" :y1="y" :y2="y" stroke="#e0e6ed" stroke-width="2.800" stroke-dasharray="10 6" />
              <text v-for="t in yTicks" :key="t[0]" class="yt" x="473" :y="t[1]" dy=".357em">{{ t[0] }}</text>
              <text v-for="t in xTicks" :key="t[0]" class="xt" :x="t[1]" y="1607.500" dy=".357em">{{ t[0] }}</text>
              <g v-for="s in series" :key="s.color">
                <polyline :points="linePoints(s.ys)" fill="none" :stroke="s.color" stroke-width="4" />
                <circle v-for="(y, i) in s.ys" :key="i" :cx="xs[i]" :cy="y + 0.5" r="8.300" fill="#fff" :stroke="s.color" stroke-width="5.400" />
              </g>
              <line x1="1183" x2="1183" y1="1127" y2="1550" stroke="#99a9bf" stroke-width="1.800" />
              <rect x="1208" y="1154" width="200" height="219" rx="16" fill="#1f2d3d" fill-opacity=".85" />
              <text class="tt" x="1225" y="1187" dy=".357em" textLength="156">14:00~14:59</text>
              <g v-for="r in tipRows" :key="r.name">
                <circle cx="1230" :cy="r.y" r="6" :fill="r.color" />
                <text class="tr-t" x="1245.500" :y="r.y" dy=".34em">{{ r.name }}<tspan class="colon">：</tspan>{{ r.value }}</text>
              </g>
            </svg>
            <div class="legend">
              <div v-for="l in legend" :key="l.name" :class="{ off: l.off }">
                <svg viewBox="0 0 60 26"><path d="M0 13H60" :stroke="l.color" stroke-width="3" /><circle cx="30" cy="13" r="9.800" :fill="l.fill" :stroke="l.color" stroke-width="4" /></svg>
                <span>{{ l.name }}</span>
              </div>
            </div>
          </section>

          <section class="panel income">
            <div class="head tint">
              <h2>实时收入统计</h2>
              <div class="money">
                <svg viewBox="0 0 72 72"><circle cx="36" cy="36" r="36" fill="#f98c07" /><path d="M10 11A36 36 0 0 0 61.500 61Z" fill="#f7a543" /><text transform="translate(36 55) scale(1.22 1)" text-anchor="middle" class="yen">¥</text></svg>
                <strong>658,720</strong>
              </div>
            </div>
            <svg class="donut" viewBox="1654 1232 560 558">
              <defs><filter id="glow" x="-10%" y="-10%" width="120%" height="120%"><feDropShadow dx="0" dy="0" stdDeviation="3.500" flood-color="#000" flood-opacity=".25" /></filter></defs>
              <polyline v-for="s in shares" :key="s[0]" :points="s[3]" fill="none" stroke="#c6d1e0" stroke-width="1.700" />
              <path v-for="s in slices" :key="s.color" :d="s.d" :fill="s.color" />
              <path :d="hotSlice" fill="#0099ff" filter="url(#glow)" />
              <text v-for="s in shares" :key="'t' + s[0]" class="share" :x="s[1]" :y="s[2]" dy=".357em">{{ s[0] }}</text>
              <rect x="1866" y="1464" width="230.500" height="91" rx="13" fill="#1f2d3d" fill-opacity=".85" />
              <text class="dt1" x="1881" y="1485.500" dy=".357em">183,577</text>
              <circle cx="1888" cy="1526" r="6" fill="#0099ff" />
              <text class="dt2" x="1903" y="1526" dy=".34em">东城区<tspan class="colon">：</tspan>25.10%</text>
            </svg>
          </section>

          <section class="panel onduty">
            <div class="head plain">
              <h2>实时在岗人数</h2>
              <div class="people">
                <svg viewBox="0 0 79 80" fill="#99a9bf"><circle cx="39.500" cy="20.500" r="20" /><path d="M0 80V69C0 56 22 50 39.500 50S79 56 79 69V80Z" /></svg>
                <p><b>324</b>/1254<small><i class="lp">（</i>总人数<i class="rp">）</i></small></p>
              </div>
            </div>
            <div class="grid">
              <div v-for="(s, i) in staff" :key="i">
                <div class="nm">{{ s.name }}</div>
                <div class="ct"><b>10</b>/60</div>
                <div class="bar"><i :style="{ width: s.width + 'px', background: s.color }" /></div>
              </div>
            </div>
          </section>
        </div>
      </main>
    </div>
  </div>
</template>

<style>
body { margin: 0; background: #fff; }
</style>

<style scoped>
* { box-sizing: border-box; }
.page { width: 2880px; height: 1852px; overflow: hidden; padding-left: 2px; display: flex; flex-direction: column; background: #fff; font-family: "Noto Sans", "Noto Sans CJK SC", sans-serif; color: #324057; }
h1, h2, p { margin: 0; font-weight: 400; }
button { padding: 0; margin: 0; font: inherit; }
.colon { font-family: "Noto Sans CJK TC", sans-serif; }
.topbar { height: 132px; flex: none; background: #313743; display: flex; align-items: center; padding-left: 40px; }
.logo { width: 80px; height: 80px; }
h1 { margin: 6px 0 0 38px; font-size: 48.300px; line-height: 60px; color: #fff; font-weight: 350; }
.body { flex: 1; display: flex; min-height: 0; }

.sidebar { width: 380px; flex: none; background: #f1f1f1; border-right: 2px solid #cdcdcd; position: relative; }
.sidebar::before { content: ""; position: absolute; left: -2px; bottom: 0; width: 2px; height: 269px; background: #c9c9c9; }
.item { position: relative; display: flex; align-items: center; height: 80px; background: #f8f8f8; border-bottom: 2px solid #e6e6e6; color: #595959; font-size: 26px; font-weight: 500; }
.item:first-child { height: 82px; border-top: 2px solid #e6e6e6; }
.micon { width: 48px; height: 40px; margin-left: 20px; }
.item span { margin: -7px 0 0 17px; line-height: 40px; flex: 1; }
.active { background: #fff; color: #3a7bbf; font-weight: 700; }
.chev { width: 14px; height: 22px; margin: -1px 28px 0 0; }
.chev path { fill: none; stroke: #666; stroke-width: 2.600; }
.mark { position: absolute; right: -4px; top: -2px; width: 4px; height: 80px; background: #3a7bbf; }
.mark::before { content: ""; position: absolute; right: 4px; top: 10px; border: 29px solid transparent; border-left: 0; border-right: 20px solid #3a7bbf; }
.collapse { height: 54px; background: #f3f3f2; border-bottom: 2px solid #dedede; display: flex; align-items: center; padding: 0 30px; }
.collapse::before, .collapse::after { content: ""; height: 2px; flex: 1; background: #dedede; }
.collapse::before { flex: 0 0 141px; }
.collapse svg { width: 40px; height: 40px; }
.collapse circle { fill: #fff; stroke: #bdbdbd; stroke-width: 1.800; }
.collapse path { fill: none; stroke: #aaa; stroke-width: 2; }

.main { padding: 60px 0 0 62px; }
.row { display: flex; gap: 40px; }
.bottom { margin-top: 40px; }
.panel { border: 2px solid #c0ccda; border-radius: 8px; background: #fff; overflow: hidden; }
.top .panel { height: 760px; }
.bottom .panel { height: 800px; }
h2 { font-size: 28px; line-height: 40px; color: #2a3442; margin-left: -1px; }

.map-panel { width: 1772px; padding: 18px; }
.map { position: relative; width: 1732px; height: 720px; overflow: hidden; }
.canvas { display: block; width: 1732px; height: 720px; }
.ln { fill: none; stroke-linejoin: round; }
.poi { font-size: 15.100px; fill: #5c5450; paint-order: stroke; stroke: #fff; stroke-width: 3px; }
.poi.green { fill: #3f8a45; }
.poi.bridge { font-size: 16.500px; font-weight: 500; fill: #9a5a12; }
.tag { font-size: 16px; font-weight: 700; fill: #fff; text-anchor: middle; }
.street { font-size: 16px; fill: #4f4a47; text-anchor: middle; paint-order: stroke; stroke: #fff; stroke-width: 3.500px; }
.street.gold { fill: #5a431a; stroke: #fdeaa0; }
.sym > circle:first-child { fill: #fff; stroke: #a9a19c; stroke-width: 1.300; }
.sym .f { fill: #6a615c; }
.sym .st { fill: none; stroke: #6a615c; stroke-width: 1.800; }
.park .f { fill: #2f7d38; }
.cross .f, .star .f { fill: #e0393e; }
.cross > circle:first-child, .star > circle:first-child { stroke: #e3676b; }
.shop .f { fill: #7a4fd0; }
.shop > circle:first-child { stroke: #8f83dd; }
.station .st { stroke: #2f77c8; }
.station > circle:first-child { stroke: #2f77c8; }
.p { font-size: 41px; fill: #fff; text-anchor: middle; }

.tools { position: absolute; left: 41px; right: 40px; top: 40px; height: 60px; display: flex; }
.select { display: flex; justify-content: space-between; align-items: center; background: #fff; border: 2px solid #c0ccda; border-radius: 8px; color: #99a9bf; font-size: 26px; }
.select i { width: 20px; height: 12px; background: #ccd8e6; clip-path: polygon(0 0, 100% 0, 50% 100%); }
.s1 { width: 180px; padding: 2px 27px 0 17px; }
.s1 i { margin-top: -4px; }
.s2 { width: 299px; margin-left: 26px; padding: 0 26px 2px 17px; }
.s2 i { margin-top: 13px; }
.query { width: 176px; margin-left: 32px; border: 0; border-radius: 8px; background: #0099ff; color: #fff; font-size: 28px; padding-bottom: 2px; }
.reset { width: 60px; margin-left: 32px; border: 2px solid #55be5a; border-radius: 8px; background: #fff; }
.reset svg { display: block; width: 60px; height: 60px; margin: -2px; }
.levels { width: 600px; margin-left: 32px; padding-left: 19px; border-radius: 5px; background: rgba(50, 50, 56, .75); color: #fff; font-size: 24px; display: flex; align-items: center; padding-top: 1px; }
.levels b { font-weight: 400; width: 131px; }
.lv { display: flex; align-items: center; letter-spacing: .4px; }
.lv::before { content: ""; width: 12px; height: 12px; border-radius: 6px; margin-right: 10px; }
.lv.g { width: 141px; }
.lv.a { width: 161px; letter-spacing: .9px; }
.lv.a::before { margin-right: 12px; }
.g::before { background: #55be5a; }
.a::before { background: #f7b422; }
.r::before { background: #e54b4b; }
.full { width: 60px; margin-left: auto; border: 0; border-radius: 5px; background: #fff; display: flex; align-items: center; justify-content: center; }
.full svg { width: 28px; height: 28px; }

.stats { width: 584px; padding: 38px 37px; }
.stats h2 { margin-left: 0; }
.tr { display: grid; grid-template-columns: 119px 136px 153px auto; align-items: center; height: 76.100px; border-bottom: 2px solid #e0e6ed; font-size: 24px; color: #5e6d82; white-space: nowrap; padding: 1px 0 0; }
.th { height: 88px; margin-top: 33px; font-weight: 700; color: #324057; padding-bottom: 4px; }
.blue { color: #0099ff; }
.left { padding-left: 3px; font-weight: 700; letter-spacing: .8px; }
.left.red { color: #e54b4b; }
.left.amber { color: #f7b422; }
.left.green { color: #55be5a; }
.sum { height: 97px; border: 0; color: #324057; }
.total { padding-left: 3px; }

.records { width: 1168px; }
.rec-head { height: 102px; display: flex; justify-content: space-between; padding: 38px 38px 0 38px; }
.badge { width: 330px; height: 64px; background: #e5e9f2; display: flex; align-items: center; padding-left: 20px; color: #324057; font-size: 28px; }
.badge svg { width: 40px; height: 40px; margin-right: 32px; }
.badge b { margin-top: -2px; white-space: nowrap; }
.badge em { font-style: normal; letter-spacing: .9px; }
.chart { display: block; width: 1164px; height: 564px; }
.yt { font-size: 20px; fill: #324057; }
.xt { font-size: 24px; fill: #324057; text-anchor: middle; letter-spacing: .8px; }
.tt { font-size: 26px; fill: #c0ccda; }
.tr-t { font-size: 26px; fill: #fff; }
.legend { height: 68px; display: flex; justify-content: center; gap: 43.500px; padding-left: 1px; color: #475669; font-size: 26px; }
.legend div { display: flex; align-items: center; gap: 16px; }
.legend svg { width: 60px; height: 26px; }
.legend span { margin-top: -3px; }
.legend .off { color: #99a9bf; }

.income { width: 564px; }
.head { height: 238px; padding: 38px 38px 0; border-bottom: 2px solid #c0ccda; }
.tint { background: #f9fafc; }
.money { display: flex; align-items: center; height: 72px; margin-top: 42px; gap: 13px; }
.money svg { width: 72px; height: 72px; }
.yen { font-size: 54px; font-weight: 700; fill: #fff; }
.money strong { font-size: 81px; line-height: 72px; color: #475669; margin-top: -5px; }
.donut { display: block; width: 560px; height: 558px; }
.share { font-size: 24.200px; fill: #1f2d3d; }
.dt1 { font-size: 28.300px; fill: #fff; }
.dt2 { font-size: 24px; fill: #fff; }

.onduty { width: 584px; }
.plain { border-bottom-color: #e0e6ed; height: 239px; }
.people { display: flex; margin: 37px 0 0 4px; }
.people svg { width: 79px; height: 80px; flex: none; margin-right: 42px; }
.people p { font-size: 50px; line-height: 51px; padding-top: 29px; color: #99a9bf; white-space: nowrap; }
.people b { font-weight: 400; color: #0099ff; }
.people small { font-size: 28px; }
.people i { font-style: normal; }
.lp { margin: 0 9px 0 -10px; }
.rp { margin-left: 9px; }
.grid { display: grid; grid-template-columns: 232px 232px; column-gap: 40px; row-gap: 29px; padding: 30px 38px 0; }
.nm { font-size: 24px; line-height: 34px; color: #99a9bf; margin: -1px 0 0 -1px; }
.ct { font-size: 34px; line-height: 46px; margin: 4px 0 0 -1px; color: #99a9bf; }
.ct b { font-weight: 400; color: #475669; }
.bar { height: 8px; margin-top: 10px; border-radius: 4px; background: #d8d8d8; overflow: hidden; }
.bar i { display: block; height: 8px; border-radius: 4px; }
</style>
